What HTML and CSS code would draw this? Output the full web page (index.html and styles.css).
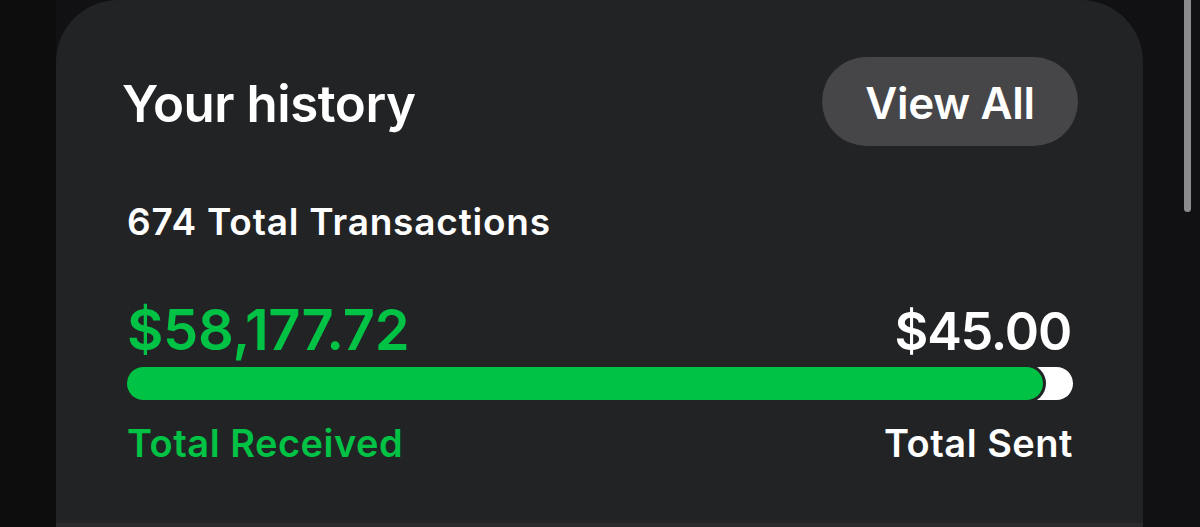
FILE: index.html
```html
<!DOCTYPE html>
<html lang="en">
<head>
<meta charset="utf-8">
<title>Your history</title>
<link rel="stylesheet" href="styles.css">
</head>
<body>
<div class="page">
  <section class="card">
    <header class="card-head">
      <h2 class="title">Your history</h2>
      <button class="view-all">View All</button>
    </header>
    <p class="count">674 Total Transactions</p>
    <div class="amounts">
      <span class="amount received">$58,177.72</span>
      <span class="amount amount-small sent">$45.00</span>
    </div>
    <div class="track">
      <div class="fill" style="width: 96.8%"></div>
    </div>
    <div class="labels">
      <span class="label received">Total Received</span>
      <span class="label sent">Total Sent</span>
    </div>
  </section>
  <div class="scrollbar"></div>
</div>
</body>
</html>
```

FILE: styles.css
```css
* { box-sizing: border-box; }

html, body {
  margin: 0;
  padding: 0;
  height: 100%;
}

body {
  background: #0e0e0f;
  font-family: "Inter", "Liberation Sans", sans-serif;
  color: #ffffff;
  overflow: hidden;
}

.page {
  position: relative;
  width: 1200px;
  height: 527px;
  display: flex;
  background: linear-gradient(to right, #0d0d0e 0, #0d0d0e 56px, #111113 56px);
}

.card {
  margin-left: 56px;
  width: 1087px;
  height: 527px;
  background: #222325;
  border-radius: 62px 62px 0 0;
  padding: 57px 70px 0 71px;
  border-bottom: 4px solid #2b2b2d;
}

.card-head {
  display: flex;
  align-items: center;
  justify-content: space-between;
  margin-right: -5px;
}

.title {
  margin: 0 0 0 -5px;
  padding-top: 4px;
  font-size: 51px;
  line-height: 1;
  font-weight: 600;
  letter-spacing: -0.45px;
}

.view-all {
  height: 89px;
  width: 256px;
  border: none;
  border-radius: 45px;
  background: #464648;
  color: #ffffff;
  font-family: inherit;
  font-size: 44px;
  font-weight: 600;
  line-height: 1;
  padding: 3px 0 0 0;
  letter-spacing: -0.3px;
  display: flex;
  align-items: center;
  justify-content: center;
}

.count {
  margin: 57px 0 0 0;
  font-size: 37px;
  line-height: 1;
  font-weight: 600;
  letter-spacing: 0.8px;
}

.amounts {
  margin-top: 62px;
  height: 58px;
  display: flex;
  justify-content: space-between;
  align-items: baseline;
}

.amount {
  font-size: 56px;
  line-height: 1;
  font-weight: 600;
  letter-spacing: -0.3px;
}

.amount-small {
  font-size: 52px;
  letter-spacing: -1.2px;
  margin-right: 2px;
}

.received { color: #00c244; }
.sent { color: #ffffff; }

.track {
  margin-top: 7px;
  height: 33px;
  border-radius: 17px;
  background: #ffffff;
  display: flex;
}

.fill {
  height: 100%;
  background: #00c244;
  border-radius: 17px;
  box-shadow: 0 0 0 3px #222325;
}

.labels {
  margin-top: 24px;
  display: flex;
  justify-content: space-between;
}

.label {
  font-size: 38px;
  line-height: 1;
  font-weight: 600;
  letter-spacing: 0.5px;
}

.scrollbar {
  position: absolute;
  left: 1184px;
  top: -6px;
  width: 7px;
  height: 218px;
  border-radius: 4px;
  background: #8c8c8e;
}
```
